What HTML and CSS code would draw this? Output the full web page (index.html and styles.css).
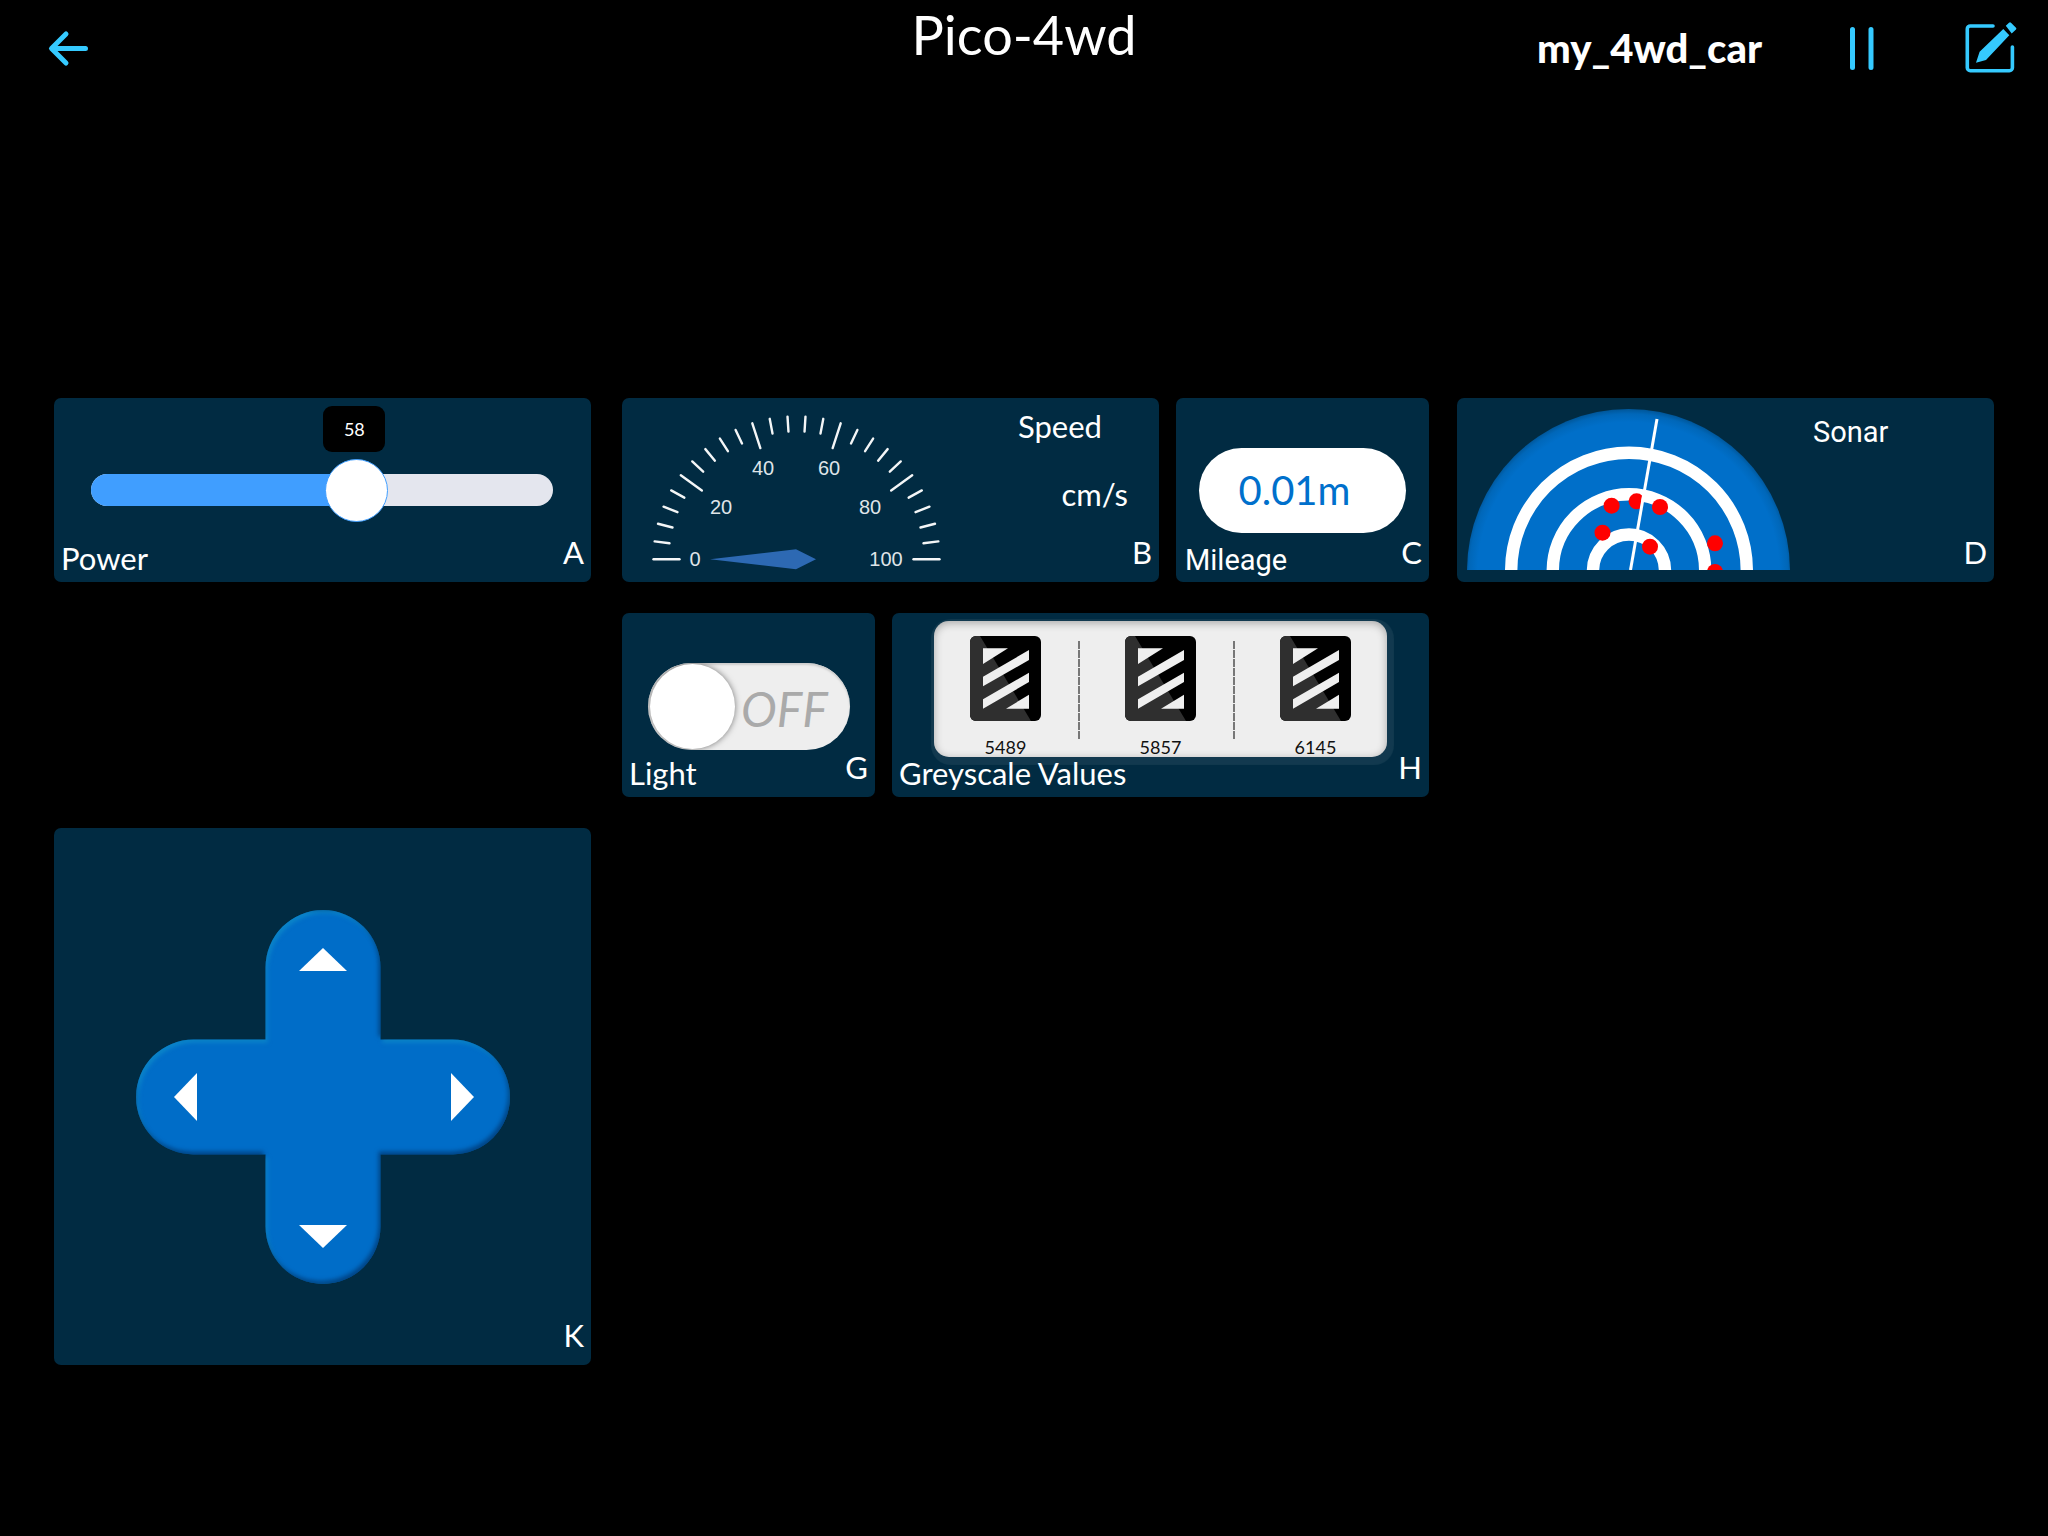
FILE: index.html
```html
<!DOCTYPE html>
<html lang="en">
<head>
<meta charset="utf-8">
<meta name="viewport" content="width=device-width, initial-scale=1">
<title>Pico-4wd</title>
<link rel="stylesheet" href="styles.css">
</head>
<body>
<header class="topbar">
  <div class="topbar-start">
    <button class="icon-button" type="button" aria-label="Back">
      <svg width="44" height="40" viewBox="0 0 44 40" fill="none" stroke="currentColor" stroke-width="5" stroke-linecap="round" stroke-linejoin="round"><path d="M20 6 5.500 20.500 20 35M6 20.500h33.500"/></svg>
    </button>
  </div>
  <h1 class="title">Pico-4wd</h1>
  <div class="topbar-end">
    <span class="device">my_4wd_car</span>
    <button class="icon-button" type="button" aria-label="Pause">
      <svg width="30" height="54" viewBox="0 0 30 54" fill="none" stroke="currentColor" stroke-width="5" stroke-linecap="round"><path d="M4.500 8.500v38M23 8.500v38"/></svg>
    </button>
    <button class="icon-button" type="button" aria-label="Edit">
      <svg width="54" height="54" viewBox="0 0 54 54"><path d="M29 5H6.300a3 3 0 0 0-3 3v38.700a3 3 0 0 0 3 3h39.100a3 3 0 0 0 3-3V26" fill="none" stroke="currentColor" stroke-width="3.600" stroke-linecap="round"/><path d="M39.300 8 45.300 14.300 22 39 12 41.700 15.600 30.700ZM41.800 4.700 45 1.800q1-1 2 0L52 6.800q.8.800 0 1.600L47.700 12.500Z" fill="currentColor"/></svg>
    </button>
  </div>
</header>

<main class="board">
  <div class="column column-left">
    <section class="card">
      <div class="card-body">
        <div class="slider">
          <div class="slider-fill" style="width:58%"></div>
          <input id="power" class="slider-input" type="range" min="0" max="100" value="58">
          <output class="slider-tip" for="power" style="left:57%">58</output>
        </div>
      </div>
      <label class="name" for="power">Power</label>
      <span class="tag">A</span>
    </section>

    <section class="card card-pad">
      <div class="dpad">
        <svg class="dpad-shape" viewBox="0 0 374 374" aria-hidden="true">
          <defs>
            <filter id="bevel" x="0" y="0" width="100%" height="100%" color-interpolation-filters="sRGB">
              <feOffset in="SourceAlpha" dx="2" dy="3" result="lo"/>
              <feGaussianBlur in="lo" stdDeviation="2" result="lob"/>
              <feComposite in="SourceAlpha" in2="lob" operator="out" result="lightMask"/>
              <feFlood flood-color="#16a0cc" flood-opacity=".5"/>
              <feComposite in2="lightMask" operator="in" result="light"/>
              <feOffset in="SourceAlpha" dx="-2" dy="-3" result="hi"/>
              <feGaussianBlur in="hi" stdDeviation="2" result="hib"/>
              <feComposite in="SourceAlpha" in2="hib" operator="out" result="darkMask"/>
              <feFlood flood-color="#00295c" flood-opacity=".6"/>
              <feComposite in2="darkMask" operator="in" result="dark"/>
              <feMerge><feMergeNode in="SourceGraphic"/><feMergeNode in="light"/><feMergeNode in="dark"/></feMerge>
            </filter>
          </defs>
          <path filter="url(#bevel)" fill="#006dc8" d="M129.500 57.500a57.500 57.500 0 0 1 115 0v72h72a57.500 57.500 0 0 1 0 115h-72v72a57.500 57.500 0 0 1-115 0v-72h-72a57.500 57.500 0 0 1 0-115h72Z"/>
        </svg>
        <button class="dpad-key dpad-up" type="button" aria-label="Forward"><svg width="48" height="23" viewBox="0 0 48 23"><path fill="#fff" d="M24 0 48 23H0Z"/></svg></button>
        <button class="dpad-key dpad-left" type="button" aria-label="Left"><svg width="23" height="48" viewBox="0 0 23 48"><path fill="#fff" d="M0 24 23 0V48Z"/></svg></button>
        <button class="dpad-key dpad-right" type="button" aria-label="Right"><svg width="23" height="48" viewBox="0 0 23 48"><path fill="#fff" d="M23 24 0 0V48Z"/></svg></button>
        <button class="dpad-key dpad-down" type="button" aria-label="Backward"><svg width="48" height="23" viewBox="0 0 48 23"><path fill="#fff" d="M24 23 48 0H0Z"/></svg></button>
      </div>
      <span class="tag">K</span>
    </section>
  </div>

  <div class="rest">
    <div class="column">
      <div class="row row-wide-first">
        <section class="card">
          <div class="card-body card-split">
            <svg class="gauge" width="294" height="162" viewBox="650 413 294 162" role="img" aria-label="Speed 0">
              <g id="ticks" stroke="#f4f6f7" stroke-width="2.400" stroke-linecap="round"></g>
              <g class="gauge-labels">
                <text x="695" y="566">0</text><text x="721" y="514">20</text><text x="763" y="475">40</text>
                <text x="829" y="475">60</text><text x="870" y="514">80</text><text x="886" y="566">100</text>
              </g>
              <path fill="#2d69b3" d="M710 559.300 796 549.300 816 559.300 796 569.300Z"/>
            </svg>
            <div class="speed-text"><span>Speed</span><span class="unit">cm/s</span></div>
          </div>
          <span class="tag">B</span>
        </section>
        <section class="card">
          <div class="card-body"><output class="pill">0.01m</output></div>
          <span class="name name-plain">Mileage</span>
          <span class="tag">C</span>
        </section>
      </div>
      <div class="row row-wide-last">
        <section class="card">
          <div class="card-body">
            <label class="switch"><input id="light" type="checkbox" role="switch" aria-label="Light"><span class="switch-state">OFF</span></label>
          </div>
          <label class="name" for="light">Light</label>
          <span class="tag">G</span>
        </section>
        <section class="card">
          <div class="card-body">
            <div class="grey-panel">
              <svg width="0" height="0" class="defs" aria-hidden="true">
                <symbol id="sensor" viewBox="0 0 71 85">
                  <rect width="71" height="85" rx="6" fill="#000"/>
                  <path fill="#2f2f2f" d="M6 0H10L61 85H6a6 6 0 0 1-6-6V6a6 6 0 0 1 6-6Z"/>
                  <path fill="#efefef" d="M13 12.300H38L13 28ZM59 14V24L13 50.300V40.700ZM59 36.700V46L13 72.700V63.300ZM59 58.700V72.700H36Z"/>
                </symbol>
              </svg>
              <div class="sensor"><svg width="71" height="85"><use href="#sensor"/></svg><span>5489</span></div>
              <div class="divider"></div>
              <div class="sensor"><svg width="71" height="85"><use href="#sensor"/></svg><span>5857</span></div>
              <div class="divider"></div>
              <div class="sensor"><svg width="71" height="85"><use href="#sensor"/></svg><span>6145</span></div>
            </div>
          </div>
          <span class="name">Greyscale Values</span>
          <span class="tag">H</span>
        </section>
      </div>
    </div>

    <div class="column">
      <section class="card">
        <div class="card-body card-split card-sonar">
          <svg width="323" height="161" viewBox="0 0 323 161" role="img" aria-label="Sonar scan">
            <defs>
              <radialGradient id="dish" gradientUnits="userSpaceOnUse" cx="161.500" cy="164" r="164">
                <stop offset=".92" stop-color="#006fc9"/><stop offset=".97" stop-color="#0067b9"/><stop offset="1" stop-color="#005699"/>
              </radialGradient>
              <clipPath id="swept"><path d="M0 0H188L164 161H0Z"/></clipPath>
            </defs>
            <circle cx="161.500" cy="161.500" r="161.500" fill="url(#dish)"/>
            <g fill="none" stroke="#fff" stroke-width="12.400">
              <circle cx="162" cy="161.500" r="117.800"/><circle cx="162" cy="161.500" r="76.200"/><circle cx="162" cy="161.500" r="36"/>
            </g>
            <g fill="#f00">
              <circle cx="144.600" cy="96.700" r="8"/><circle cx="169.600" cy="92.300" r="8" clip-path="url(#swept)"/><circle cx="193" cy="98" r="8"/>
              <circle cx="135.500" cy="123.700" r="8"/><circle cx="183" cy="137.700" r="8"/><circle cx="248" cy="134.300" r="8"/><circle cx="248" cy="163" r="8"/>
            </g>
            <path d="M163.500 161 190 10" stroke="#fff" stroke-width="3"/>
          </svg>
          <span class="sonar-text">Sonar</span>
        </div>
        <span class="tag">D</span>
      </section>
    </div>
  </div>
</main>
<script src="gauge.js"></script>
</body>
</html>
```
FILE: gauge.js
```js
// Draws one tick per four units on the 0-100 half dial; every fifth is long.
const SVG_NS = 'http://www.w3.org/2000/svg';
const ticks = document.getElementById('ticks');
for (let i = 0; i <= 25; i++) {
  const a = Math.PI * (1 - i / 25);
  const inner = i % 5 === 0 ? 117 : 128;
  const line = document.createElementNS(SVG_NS, 'line');
  line.setAttribute('x1', 796.5 + inner * Math.cos(a));
  line.setAttribute('y1', 559.3 - inner * Math.sin(a));
  line.setAttribute('x2', 796.5 + 143 * Math.cos(a));
  line.setAttribute('y2', 559.3 - 143 * Math.sin(a));
  ticks.appendChild(line);
}
```
FILE: styles.css
```css
* { box-sizing: border-box; }

body {
  margin: 0;
  min-height: 100vh;
  background: #000;
  color: #fff;
  font-family: Lato, "Open Sans", sans-serif;
  font-size: 31px;
  line-height: 32px;
}

svg { display: block; }
button { padding: 0; border: 0; background: none; color: inherit; cursor: pointer; }

.topbar {
  display: grid;
  grid-template-columns: 1fr auto 1fr;
  height: 96px;
}
.topbar-start, .topbar-end { display: flex; align-items: center; }
.topbar-start { padding-left: 46px; }
.topbar-end { justify-content: flex-end; gap: 86px; padding-right: 30px; }
.icon-button { color: #35caff; }
.title {
  margin: 0;
  font-size: 54px;
  line-height: 70px;
  font-weight: 400;
}
.device { font-size: 40px; line-height: 46px; font-weight: 900; }

.board { display: flex; gap: 31px; padding: 302px 54px 0; }
.column { display: flex; flex-direction: column; gap: 31px; min-width: 0; }
.column-left {
  flex: 537 1 0;
  display: grid;
  grid-template-rows: 184px 184px auto;
}
.rest {
  flex: 1372 1 0;
  display: grid;
  grid-template-columns: 807fr 537fr;
  align-items: start;
  gap: 28px;
}
.row { display: grid; gap: 17px; }
.row-wide-first { grid-template-columns: 537fr 253fr; }
.row-wide-last { grid-template-columns: 253fr 537fr; }

.card {
  display: grid;
  grid-template: 144px 40px / 1fr auto;
  border-radius: 7px;
  background: #012b42;
  font-weight: 400;
}
.card-body { grid-area: 1 / 1 / 2 / 3; }
.name { grid-area: 2 / 1; padding-left: 7px; }
.name-plain { padding-left: 9px; font: 29px/36px Roboto, sans-serif; }
.tag { grid-area: 1 / 2 / 3 / 3; align-self: end; padding: 0 7px 14px 0; }
.card-split { grid-row: 1 / 3; display: flex; }

.slider {
  position: relative;
  height: 32px;
  margin: 76px 38px 0 37px;
  border-radius: 16px;
  background: #e4e6ee;
}
.slider-fill { height: 32px; border-radius: 16px 0 0 16px; background: #409eff; }
.slider-input {
  position: absolute;
  top: -16px;
  left: -16px;
  width: calc(100% + 32px);
  height: 64px;
  margin: 0;
  appearance: none;
  background: none;
}
.slider-input::-webkit-slider-thumb {
  appearance: none;
  width: 63px;
  height: 63px;
  border: 1px solid #409eff;
  border-radius: 50%;
  background: #fff;
}
.slider-tip {
  position: absolute;
  bottom: 54px;
  width: 62px;
  border-radius: 9px;
  transform: translateX(-50%);
  background: #000;
  font-size: 18px;
  line-height: 46px;
  text-align: center;
}

.gauge { margin: 15px 0 0 28px; }
.gauge-labels {
  fill: #dfe4e8;
  font: 20px "Liberation Sans", Arial, sans-serif;
  text-anchor: middle;
}
.speed-text {
  display: flex;
  flex-direction: column;
  gap: 36px;
  width: 110px;
  margin: 12px 31px 0 auto;
}
.unit { align-self: flex-end; }

.pill {
  display: block;
  margin: 50px 23px 0;
  padding-right: 16px;
  border-radius: 43px;
  background: #fff;
  color: #0070cc;
  font-size: 40px;
  line-height: 85px;
  text-align: center;
}

.switch {
  display: flex;
  align-items: center;
  height: 87px;
  margin: 50px 25px 0 26px;
  padding-left: 2px;
  overflow: hidden;
  border-radius: 44px;
  background: #eee;
  box-shadow: inset 0 2px 2px #ccc;
}
.switch input {
  flex: none;
  width: 85px;
  height: 85px;
  margin: 0;
  appearance: none;
  border-radius: 50%;
  background: #fff;
  box-shadow: 0 0 6px rgba(0, 0, 0, .5);
}
.switch-state {
  padding: 4px 0 0 6px;
  color: #aaa;
  font-size: 48px;
  font-style: italic;
  line-height: 56px;
}

.grey-panel {
  display: flex;
  justify-content: center;
  height: 136px;
  margin: 8px 42px 0;
  padding-top: 15px;
  border-radius: 15px;
  background: #eee;
  box-shadow: inset 0 2px 8px rgba(0, 0, 0, .3), 2px 3px 1px 5px rgba(255, 255, 255, .07);
  color: #111;
  font-size: 18px;
}
.defs { position: absolute; }
.sensor { display: flex; flex: none; flex-direction: column; align-items: center; gap: 13px; width: 71px; }
.sensor svg { flex: none; }
.sensor span { line-height: 26px; }
.divider {
  flex: none;
  width: 2px;
  height: 98px;
  margin: 5px 45px 0 37px;
  background: repeating-linear-gradient(#777 0 8px, #eee 8px 9px);
}

.card-sonar { padding: 11px 0 0 10px; }
.sonar-text { margin: 7px 0 0 23px; font: 29px/32px Roboto, sans-serif; }

.card-pad { grid-row: 3; aspect-ratio: 1; grid-template: 1fr 40px / 1fr auto; }
.dpad {
  grid-area: 1 / 1 / 3 / 3;
  place-self: center;
  position: relative;
  display: grid;
  grid-template: 1fr 115px 1fr / 1fr 115px 1fr;
  width: 374px;
  height: 374px;
}
.dpad-shape { position: absolute; inset: 0; }
.dpad-key { position: relative; display: flex; align-items: center; justify-content: center; }
.dpad-up { grid-area: 1 / 2; align-items: flex-start; padding-top: 38px; }
.dpad-left { grid-area: 2 / 1; justify-content: flex-start; padding-left: 38px; }
.dpad-right { grid-area: 2 / 3; justify-content: flex-end; padding-right: 36px; }
.dpad-down { grid-area: 3 / 2; align-items: flex-end; padding-bottom: 36px; }
```
